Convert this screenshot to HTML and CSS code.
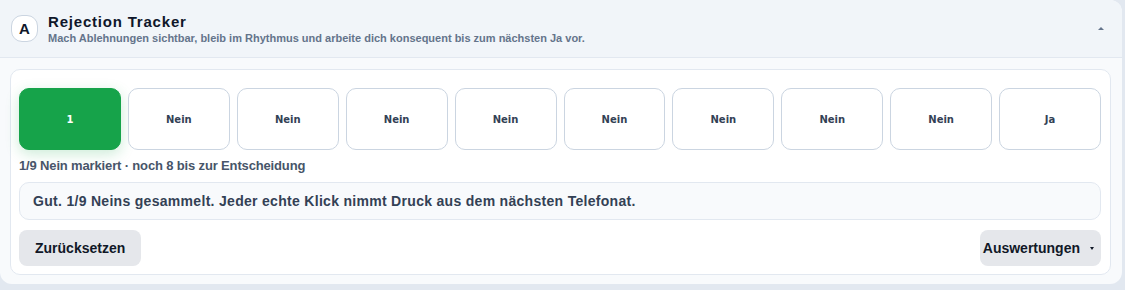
FILE: index.html
```html
<!DOCTYPE html>
<html lang="de">
<head>
    <meta charset="UTF-8">
    <meta name="viewport" content="width=device-width, initial-scale=1.0">
    <title>Rejection Tracker</title>
    <link rel="stylesheet" href="styles.css">
</head>
<body>
    <!-- Panel -->
    <div class="panel">
        <div class="panel-header">
            <div class="avatar">A</div>
            <div class="titles">
                <h1>Rejection Tracker</h1>
                <p>Mach Ablehnungen sichtbar, bleib im Rhythmus und arbeite dich konsequent bis zum nächsten Ja vor.</p>
            </div>
            <span class="collapse"></span>
        </div>

        <div class="panel-body">
            <div class="tracker">
                <div class="slots" id="slots">
                    <!-- Felder werden per Script erzeugt -->
                </div>
                <div class="status">1/9 Nein markiert · noch 8 bis zur Entscheidung</div>
                <div class="message">Gut. 1/9 Neins gesammelt. Jeder echte Klick nimmt Druck aus dem nächsten Telefonat.</div>
                <div class="actions">
                    <button class="btn">Zurücksetzen</button>
                    <button class="btn btn-menu">Auswertungen <span class="caret"></span></button>
                </div>
            </div>
        </div>
    </div>

    <script>
        const slots = ['1', 'Nein', 'Nein', 'Nein', 'Nein', 'Nein', 'Nein', 'Nein', 'Nein', 'Ja'];
        const box = document.getElementById('slots');
        slots.forEach((label, i) => {
            const el = document.createElement('button');
            el.className = 'slot' + (i === 0 ? ' done' : '');
            el.textContent = label;
            box.appendChild(el);
        });
    </script>
</body>
</html>
```

FILE: styles.css
```css
body {
    margin: 0;
    background-color: #e2e8f0;
    font-family: "Liberation Sans", Arial, sans-serif;
}

.panel {
    width: 1122px;
    background-color: #f8fafc;
    border-radius: 0 12px 12px 12px;
    overflow: hidden;
}

.panel-header {
    display: flex;
    align-items: center;
    height: 57px;
    padding: 0 18px 0 11px;
    background-color: #f1f5f9;
    border-bottom: 1px solid #e2e8f0;
}

.avatar {
    width: 25px;
    height: 25px;
    border: 1px solid #cbd5e1;
    border-radius: 11px;
    background-color: white;
    display: flex;
    align-items: center;
    justify-content: center;
    font-size: 15px;
    font-weight: bold;
    color: #0f172a;
}

.titles {
    margin-left: 10px;
    flex-grow: 1;
}

.titles h1 {
    margin: 0;
    font-size: 15px;
    line-height: 17px;
    letter-spacing: 0.8px;
    color: #0f172a;
}

.titles p {
    margin: 1px 0 0;
    font-size: 11px;
    line-height: 14px;
    font-weight: bold;
    color: #64748b;
}

.collapse {
    width: 0;
    height: 0;
    border-left: 3px solid transparent;
    border-right: 3px solid transparent;
    border-bottom: 3px solid #64748b;
}

.panel-body {
    padding: 11px 11px 9px 10px;
}

.tracker {
    background-color: white;
    border: 1px solid #e2e8f0;
    border-radius: 10px;
    padding: 18px 9px 8px 8px;
}

.slots {
    display: grid;
    grid-template-columns: repeat(10, 1fr);
    gap: 7px;
}

.slot {
    height: 62px;
    border: 1px solid #cbd5e1;
    border-radius: 10px;
    background-color: white;
    font-family: "DejaVu Sans", Verdana, sans-serif;
    font-size: 10px;
    font-weight: bold;
    color: #334155;
    cursor: pointer;
}

.slot.done {
    background-color: #16a34a;
    border-color: #16a34a;
    color: white;
    box-shadow: 0 4px 14px rgba(22, 163, 74, 0.22);
}

.status {
    margin-top: 8px;
    font-size: 13px;
    line-height: 16px;
    font-weight: bold;
    letter-spacing: -0.15px;
    color: #475569;
}

.message {
    margin-top: 8px;
    height: 36px;
    display: flex;
    align-items: center;
    padding: 0 13px;
    background-color: #f8fafc;
    border: 1px solid #e2e8f0;
    border-radius: 10px;
    font-size: 14px;
    font-weight: bold;
    letter-spacing: 0.3px;
    color: #334155;
}

.actions {
    margin-top: 10px;
    display: flex;
    justify-content: space-between;
}

.btn {
    height: 36px;
    padding: 0 16px;
    border: none;
    border-radius: 8px;
    background-color: #e5e7eb;
    font-family: "Liberation Sans", Arial, sans-serif;
    font-size: 14px;
    font-weight: bold;
    color: #111827;
    cursor: pointer;
}

.btn-menu {
    display: flex;
    align-items: center;
    gap: 10px;
    padding: 0 7px 0 3px;
}

.caret {
    width: 0;
    height: 0;
    border-left: 2.5px solid transparent;
    border-right: 2.5px solid transparent;
    border-top: 3px solid #111827;
}
```
